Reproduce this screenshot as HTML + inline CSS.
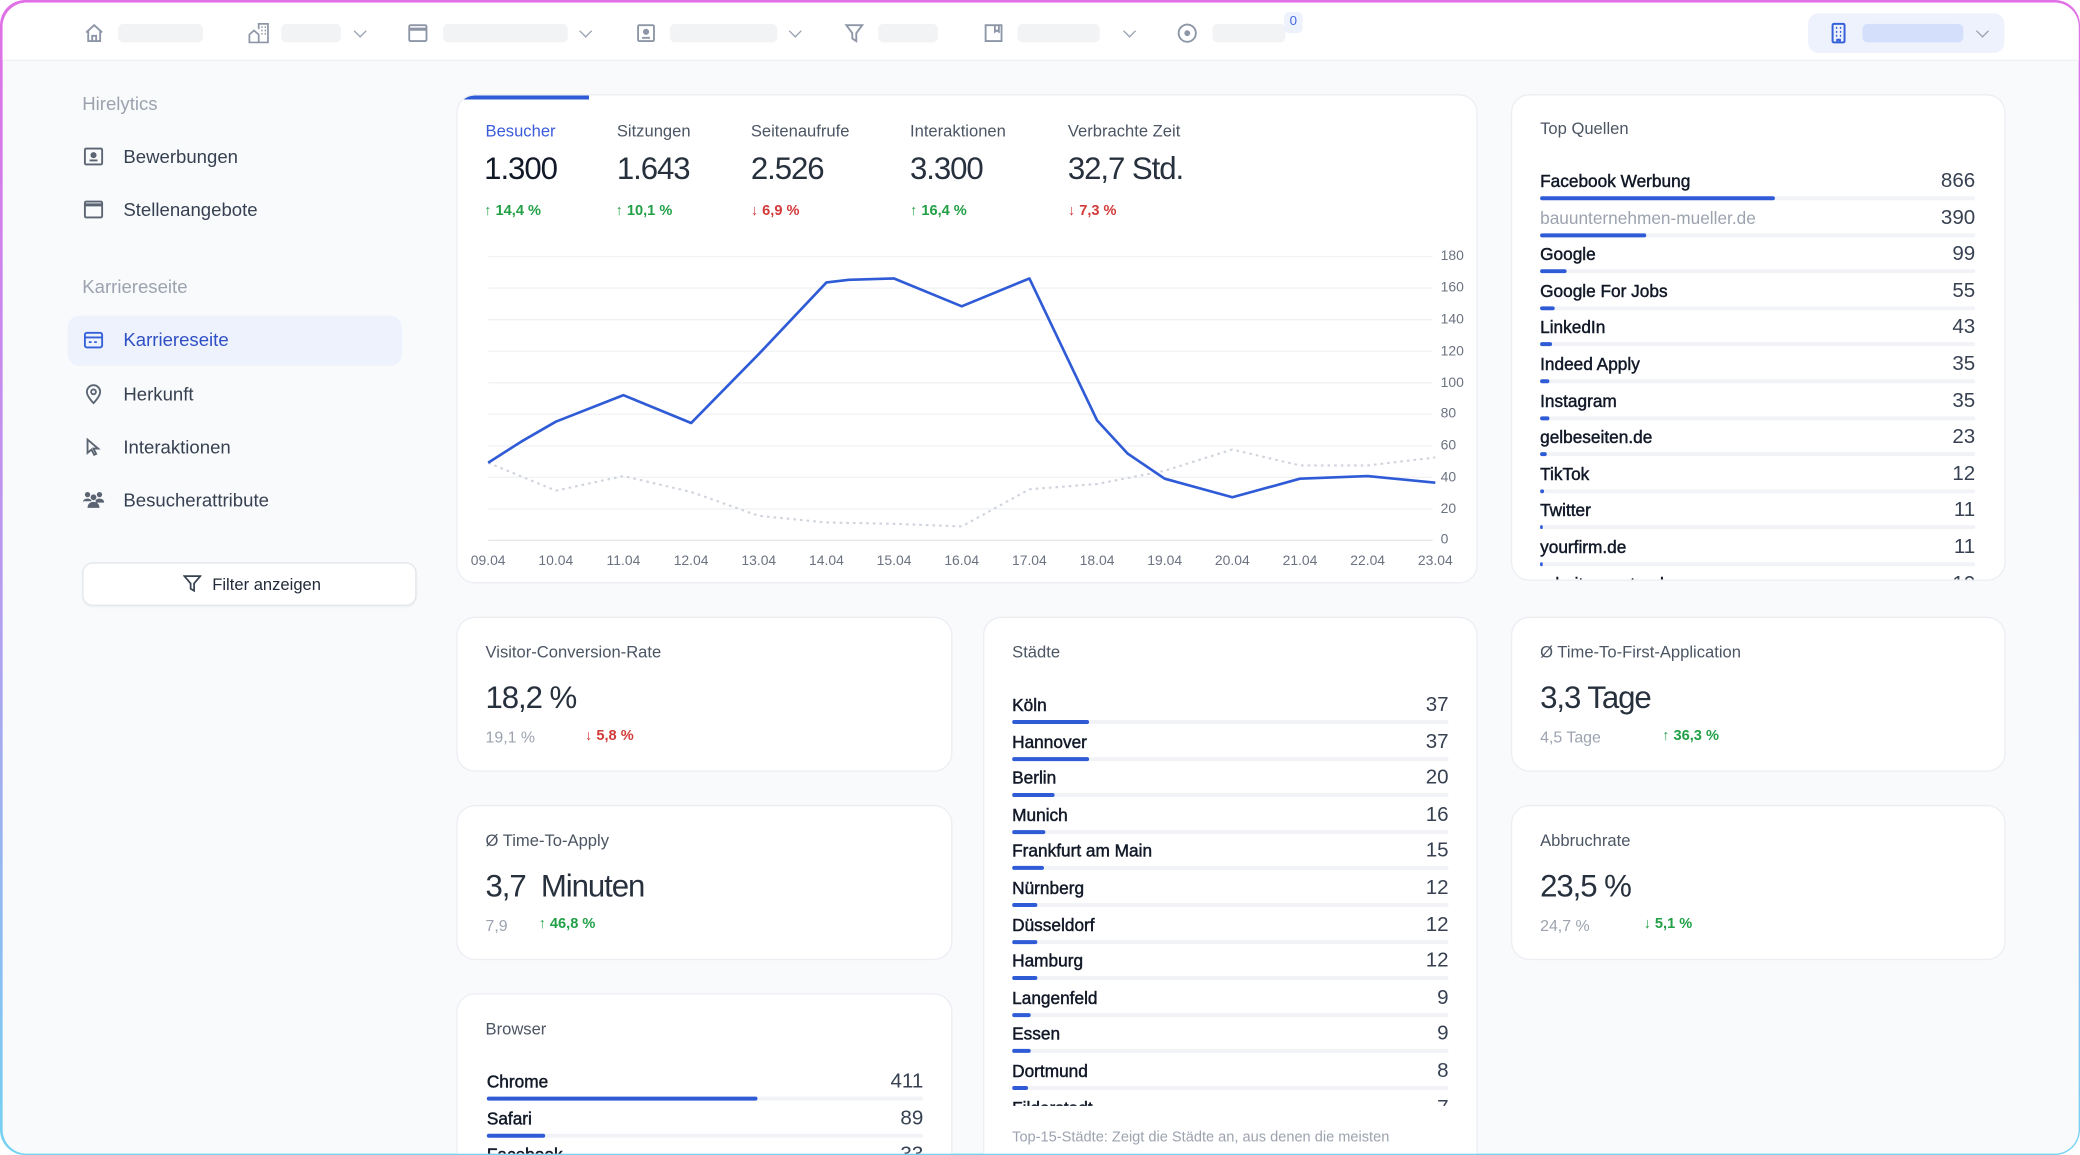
<!DOCTYPE html>
<html><head><meta charset="utf-8"><style>
*{box-sizing:border-box;margin:0;padding:0}
html,body{width:2080px;height:1155px;overflow:hidden;background:#fff;font-family:"Liberation Sans",Arial,sans-serif}
.s{position:absolute;left:0;top:0;width:1568px;height:871px;transform:scale(1.32653,1.32606);transform-origin:0 0}
.frame{position:absolute;left:0;top:0;width:1568px;height:871px;border-radius:19px;background:linear-gradient(180deg,#e16fe6 0%,#b89bf0 50%,#74d2f2 100%)}
.inner{position:absolute;left:1.5px;top:1.5px;right:1.5px;bottom:1.5px;border-radius:18px;background:#f8fafc;overflow:hidden}
.c{position:absolute;left:-1.5px;top:-1.5px;width:1568px;height:871px}
.top{position:absolute;left:0;top:0;right:0;height:46px;background:#fff;border-bottom:1px solid #f0f1f4}
.ph{position:absolute;height:14px;border-radius:4px;background:#f2f3f5}
.ic{position:absolute}
.chev{position:absolute;width:7px;height:7px;border-right:1.3px solid #9aa3b2;border-bottom:1.3px solid #9aa3b2;transform:rotate(45deg)}
.a{position:absolute;white-space:nowrap}
.card{position:absolute;background:#fff;border:1px solid #eceef2;border-radius:14px;overflow:hidden}
.side{font-size:14px;color:#374151}
.row{position:absolute;left:0;right:0;height:27.6px}
.row .l{position:absolute;left:0;top:0;font-size:13px;color:#111827;line-height:16px;-webkit-text-stroke:0.35px #111827}
.row .v{position:absolute;right:0;top:-1px;font-size:15.5px;color:#374151;line-height:18px}
.row .t{position:absolute;left:0;right:0;top:19px;height:3px;background:#f1f3f6;border-radius:2px}
.row .f{position:absolute;left:0;top:0;height:3px;background:#2f5bd6;border-radius:2px}
.ttl{font-size:12.5px;color:#4b5563}
.big{font-size:23.5px;color:#27303d;letter-spacing:-0.8px}
.up{color:#22a047;font-size:11px;font-weight:bold}
.dn{color:#d33a3a;font-size:11px;font-weight:bold}
.gr{color:#9ca3af;font-size:12px}
.ax{font-size:10.5px;fill:#6b7280;font-family:"Liberation Sans",Arial,sans-serif}
</style></head><body><div class="s"><div class="frame"><div class="inner"><div class="c">
<div class="top">
 <svg class="ic" style="left:63px;top:17px" width="16" height="16" viewBox="0 0 16 16" fill="none" stroke="#8d96a6" stroke-width="1.4"><path d="M2 7.5L8 2l6 5.5M3.5 6.5V14h9V6.5M6.5 14v-4h3v4"/></svg>
 <div class="ph" style="left:89px;top:18px;width:64px"></div>
 <svg class="ic" style="left:186px;top:16px" width="18" height="18" viewBox="0 0 18 18" fill="none" stroke="#8d96a6" stroke-width="1.3"><path d="M2 16V10l3.5-3 3.5 3v6zM9 6V2h7v14H9"/><path d="M11 4.5h1M13.5 4.5h1M11 7h1M13.5 7h1M11 9.5h1M13.5 9.5h1"/></svg>
 <div class="ph" style="left:212px;top:18px;width:45px"></div><div class="chev" style="left:268px;top:20px"></div>
 <svg class="ic" style="left:307px;top:17px" width="16" height="16" viewBox="0 0 16 16" fill="none" stroke="#8d96a6" stroke-width="1.4"><rect x="1.5" y="2" width="13" height="12" rx="1"/><path d="M1.5 5h13" stroke-width="2.4"/></svg>
 <div class="ph" style="left:334px;top:18px;width:94px"></div><div class="chev" style="left:438px;top:20px"></div>
 <svg class="ic" style="left:479px;top:17px" width="16" height="16" viewBox="0 0 16 16" fill="none" stroke="#8d96a6" stroke-width="1.4"><rect x="2" y="2" width="12" height="12" rx="1"/><circle cx="8" cy="7" r="1.6" fill="#8d96a6"/><path d="M5 11.5h6"/></svg>
 <div class="ph" style="left:505px;top:18px;width:81px"></div><div class="chev" style="left:596px;top:20px"></div>
 <svg class="ic" style="left:636px;top:17px" width="16" height="16" viewBox="0 0 16 16" fill="none" stroke="#8d96a6" stroke-width="1.4"><path d="M2 2h12L9.5 8v6l-3-2V8z"/></svg>
 <div class="ph" style="left:662px;top:18px;width:45px"></div>
 <svg class="ic" style="left:741px;top:17px" width="16" height="16" viewBox="0 0 16 16" fill="none" stroke="#8d96a6" stroke-width="1.4"><path d="M2 2h12v12H2zM9 2v5l1.5-1L12 7V2"/></svg>
 <div class="ph" style="left:767px;top:18px;width:62px"></div><div class="chev" style="left:848px;top:20px"></div>
 <svg class="ic" style="left:887px;top:17px" width="16" height="16" viewBox="0 0 16 16" fill="none" stroke="#8d96a6" stroke-width="1.4"><circle cx="8" cy="8" r="6.5"/><circle cx="8" cy="8" r="1.5" fill="#8d96a6"/></svg>
 <div class="ph" style="left:914px;top:18px;width:55px"></div>
 <div class="a" style="left:968px;top:9px;width:14px;height:16px;border-radius:4px;background:#eef2fd;color:#4169e1;font-size:10px;text-align:center;line-height:15px">0</div>
 <div class="a" style="left:1363px;top:10px;width:148px;height:30px;border-radius:8px;background:#edf2fd"></div>
 <svg class="ic" style="left:1379px;top:17px" width="14" height="16" viewBox="0 0 14 16" fill="none" stroke="#3560d8" stroke-width="1.5"><rect x="2.5" y="1" width="9" height="14" rx="1"/><path d="M5 4h1M8 4h1M5 7h1M8 7h1M5 10h1M8 10h1M6 15v-2h2v2"/></svg>
 <div class="ph" style="left:1404px;top:18px;width:76px;background:#d3dffb"></div><div class="chev" style="left:1491px;top:20px"></div>
</div>

<div class="a" style="left:62px;top:70px;font-size:14px;color:#9ca3af">Hirelytics</div>
<svg class="ic" style="left:63px;top:111px" width="15" height="14" viewBox="0 0 15 14" fill="none" stroke="#5b6472" stroke-width="1.4"><rect x="1" y="1" width="13" height="12" rx="1"/><circle cx="7.5" cy="6" r="1.6" fill="#5b6472"/><path d="M4.5 10h6"/></svg>
<div class="a side" style="left:93px;top:110px">Bewerbungen</div>
<svg class="ic" style="left:63px;top:151px" width="15" height="14" viewBox="0 0 15 14" fill="none" stroke="#5b6472" stroke-width="1.4"><rect x="1" y="1" width="13" height="12" rx="1"/><path d="M1 3.5h13" stroke-width="2.2"/></svg>
<div class="a side" style="left:93px;top:150px">Stellenangebote</div>
<div class="a" style="left:62px;top:208px;font-size:14px;color:#9ca3af">Karriereseite</div>
<div class="a" style="left:51px;top:238px;width:252px;height:38px;border-radius:9px;background:#edf2fd"></div>
<svg class="ic" style="left:63px;top:250px" width="15" height="13" viewBox="0 0 15 13" fill="none" stroke="#3560d8" stroke-width="1.4"><rect x="1" y="1" width="13" height="11" rx="1.5"/><path d="M1 4.5h13M4 8h2M8 8h2"/></svg>
<div class="a side" style="left:93px;top:248px;color:#2f4fc4">Karriereseite</div>
<svg class="ic" style="left:64px;top:289px" width="13" height="16" viewBox="0 0 13 16" fill="none" stroke="#5b6472" stroke-width="1.4"><path d="M6.5 15s5-5 5-8.5a5 5 0 0 0-10 0C1.5 10 6.5 15 6.5 15z"/><circle cx="6.5" cy="6.5" r="1.8"/></svg>
<div class="a side" style="left:93px;top:289px">Herkunft</div>
<svg class="ic" style="left:64px;top:330px" width="12" height="14" viewBox="0 0 12 14" fill="none" stroke="#5b6472" stroke-width="1.4"><path d="M2 1.5v10l3-2.5 2 4 1.5-.7-2-4H10z"/></svg>
<div class="a side" style="left:93px;top:329px">Interaktionen</div>
<svg class="ic" style="left:62px;top:370px" width="17" height="14" viewBox="0 0 17 14" fill="#5b6472"><circle cx="4" cy="3" r="2"/><circle cx="13" cy="3" r="2"/><circle cx="8.5" cy="5" r="2.2"/><path d="M0.5 9c0-2 1.5-3 3.5-3s3 1 3 2H1zM10 8c0-1 1-2 3-2s3.5 1 3.5 3h-6zM4 13c0-3 2-4.5 4.5-4.5S13 10 13 13z"/></svg>
<div class="a side" style="left:93px;top:369px">Besucherattribute</div>
<div class="a" style="left:62px;top:424px;width:252px;height:33px;border-radius:8px;background:#fff;border:1px solid #e3e6eb;box-shadow:0 1px 2px rgba(0,0,0,.04)"></div>
<svg class="ic" style="left:138px;top:433px" width="14" height="14" viewBox="0 0 14 14" fill="none" stroke="#374151" stroke-width="1.3"><path d="M1 1.5h12L8.3 7v5.5l-2.6-1.5V7z"/></svg>
<div class="a" style="left:160px;top:434px;font-size:12.5px;color:#1f2937">Filter anzeigen</div>

<div class="card" style="left:344px;top:71px;width:770px;height:369px">
 <div style="position:absolute;left:0;top:0;width:99px;height:3px;background:#2f5bd6;border-top-left-radius:14px"></div>
</div>
<div class="a" style="left:366px;top:92px;font-size:12.5px;color:#3b5bdb">Besucher</div>
<div class="a" style="left:465px;top:92px;font-size:12.5px;color:#4b5563">Sitzungen</div>
<div class="a" style="left:566px;top:92px;font-size:12.5px;color:#4b5563">Seitenaufrufe</div>
<div class="a" style="left:686px;top:92px;font-size:12.5px;color:#4b5563">Interaktionen</div>
<div class="a" style="left:805px;top:92px;font-size:12.5px;color:#4b5563">Verbrachte Zeit</div>
<div class="a big" style="left:365px;top:114px;color:#111827">1.300</div>
<div class="a big" style="left:465px;top:114px">1.643</div>
<div class="a big" style="left:566px;top:114px">2.526</div>
<div class="a big" style="left:686px;top:114px">3.300</div>
<div class="a big" style="left:805px;top:114px">32,7 Std.</div>
<div class="a up" style="left:365px;top:153px">↑ 14,4 %</div>
<div class="a up" style="left:464px;top:153px">↑ 10,1 %</div>
<div class="a dn" style="left:566px;top:153px">↓ 6,9 %</div>
<div class="a up" style="left:686px;top:153px">↑ 16,4 %</div>
<div class="a dn" style="left:805px;top:153px">↓ 7,3 %</div>
<svg class="ic" style="left:0;top:0" width="1568" height="440" viewBox="0 0 1568 440">
 <g stroke="#f1f2f4" stroke-width="1">
  <path d="M368 193.5H1080M368 217.3H1080M368 241.1H1080M368 264.9H1080M368 288.7H1080M368 312.4H1080M368 336.2H1080M368 360H1080M368 383.8H1080"/>
 </g>
 <path d="M368 407.5H1080" stroke="#e3e5e9" stroke-width="1"/>
 <g class="ax" text-anchor="start">
  <text x="1086" y="196">180</text><text x="1086" y="220">160</text><text x="1086" y="244">140</text><text x="1086" y="268">120</text><text x="1086" y="292">100</text><text x="1086" y="315">80</text><text x="1086" y="339">60</text><text x="1086" y="363">40</text><text x="1086" y="387">20</text><text x="1086" y="410">0</text>
 </g>
 <g class="ax" text-anchor="middle">
  <text x="368" y="426">09.04</text><text x="419" y="426">10.04</text><text x="470" y="426">11.04</text><text x="521" y="426">12.04</text><text x="572" y="426">13.04</text><text x="623" y="426">14.04</text><text x="674" y="426">15.04</text><text x="725" y="426">16.04</text><text x="776" y="426">17.04</text><text x="827" y="426">18.04</text><text x="878" y="426">19.04</text><text x="929" y="426">20.04</text><text x="980" y="426">21.04</text><text x="1031" y="426">22.04</text><text x="1082" y="426">23.04</text>
 </g>
 <polyline fill="none" stroke="#cfd4dd" stroke-width="1.6" stroke-dasharray="2 3" points="368,349 419,370 470,359 521,371 572,389 623,394 674,395 725,397 776,369 827,365 878,355 929,339 980,351 1031,351 1082,345"/>
 <polyline fill="none" stroke="#2f5bd6" stroke-width="2" stroke-linejoin="round" points="368,349 393,333 419,318 470,298 521,319 572,267 623,213 640,211 674,210 725,231 776,210 827,317 850,342 878,361 929,375 980,361 1031,359 1082,364"/>
</svg>

<div class="card" style="left:1139px;top:71px;width:373px;height:367px">
 <div class="a ttl" style="left:21px;top:18px">Top Quellen</div>
 <div style="position:absolute;left:21px;right:22px;top:57px;bottom:0">
  <div class="row" style="top:0"><div class="l">Facebook Werbung</div><div class="v">866</div><div class="t"><div class="f" style="width:177px"></div></div></div>
  <div class="row" style="top:27.6px"><div class="l" style="color:#9ca3af;-webkit-text-stroke:0">bauunternehmen-mueller.de</div><div class="v">390</div><div class="t"><div class="f" style="width:80px"></div></div></div>
  <div class="row" style="top:55.2px"><div class="l">Google</div><div class="v">99</div><div class="t"><div class="f" style="width:20px"></div></div></div>
  <div class="row" style="top:82.8px"><div class="l">Google For Jobs</div><div class="v">55</div><div class="t"><div class="f" style="width:11px"></div></div></div>
  <div class="row" style="top:110.4px"><div class="l">LinkedIn</div><div class="v">43</div><div class="t"><div class="f" style="width:9px"></div></div></div>
  <div class="row" style="top:138px"><div class="l">Indeed Apply</div><div class="v">35</div><div class="t"><div class="f" style="width:7px"></div></div></div>
  <div class="row" style="top:165.6px"><div class="l">Instagram</div><div class="v">35</div><div class="t"><div class="f" style="width:7px"></div></div></div>
  <div class="row" style="top:193.2px"><div class="l">gelbeseiten.de</div><div class="v">23</div><div class="t"><div class="f" style="width:5px"></div></div></div>
  <div class="row" style="top:220.8px"><div class="l">TikTok</div><div class="v">12</div><div class="t"><div class="f" style="width:3px"></div></div></div>
  <div class="row" style="top:248.4px"><div class="l">Twitter</div><div class="v">11</div><div class="t"><div class="f" style="width:2px"></div></div></div>
  <div class="row" style="top:276px"><div class="l">yourfirm.de</div><div class="v">11</div><div class="t"><div class="f" style="width:2px"></div></div></div>
  <div class="row" style="top:303.6px"><div class="l">arbeitsagentur.de</div><div class="v">10</div><div class="t"><div class="f" style="width:2px"></div></div></div>
 </div>
</div>

<div class="card" style="left:344px;top:465px;width:374px;height:117px">
 <div class="a ttl" style="left:21px;top:19px">Visitor-Conversion-Rate</div>
 <div class="a big" style="left:21px;top:47px">18,2 %</div>
 <div class="a gr" style="left:21px;top:83px">19,1 %</div>
 <div class="a dn" style="left:96px;top:83px">↓ 5,8 %</div>
</div>
<div class="card" style="left:344px;top:607px;width:374px;height:117px">
 <div class="a ttl" style="left:21px;top:19px">Ø Time-To-Apply</div>
 <div class="a big" style="left:21px;top:47px">3,7&nbsp; Minuten</div>
 <div class="a gr" style="left:21px;top:83px">7,9</div>
 <div class="a up" style="left:61px;top:83px">↑ 46,8 %</div>
</div>
<div class="card" style="left:344px;top:749px;width:374px;height:140px">
 <div class="a ttl" style="left:21px;top:19px">Browser</div>
 <div style="position:absolute;left:22px;right:21px;top:58px;height:80px">
  <div class="row" style="top:0"><div class="l">Chrome</div><div class="v">411</div><div class="t"><div class="f" style="width:204px"></div></div></div>
  <div class="row" style="top:27.6px"><div class="l">Safari</div><div class="v">89</div><div class="t"><div class="f" style="width:44px"></div></div></div>
  <div class="row" style="top:55.2px"><div class="l">Facebook</div><div class="v">33</div><div class="t"><div class="f" style="width:16px"></div></div></div>
 </div>
</div>

<div class="card" style="left:741px;top:465px;width:373px;height:430px">
 <div class="a ttl" style="left:21px;top:19px">Städte</div>
 <div style="position:absolute;left:21px;right:21px;top:58px;height:310px;overflow:hidden">
  <div class="row" style="top:0"><div class="l">Köln</div><div class="v">37</div><div class="t"><div class="f" style="width:58px"></div></div></div>
  <div class="row" style="top:27.6px"><div class="l">Hannover</div><div class="v">37</div><div class="t"><div class="f" style="width:58px"></div></div></div>
  <div class="row" style="top:55.2px"><div class="l">Berlin</div><div class="v">20</div><div class="t"><div class="f" style="width:32px"></div></div></div>
  <div class="row" style="top:82.8px"><div class="l">Munich</div><div class="v">16</div><div class="t"><div class="f" style="width:25px"></div></div></div>
  <div class="row" style="top:110.4px"><div class="l">Frankfurt am Main</div><div class="v">15</div><div class="t"><div class="f" style="width:24px"></div></div></div>
  <div class="row" style="top:138px"><div class="l">Nürnberg</div><div class="v">12</div><div class="t"><div class="f" style="width:19px"></div></div></div>
  <div class="row" style="top:165.6px"><div class="l">Düsseldorf</div><div class="v">12</div><div class="t"><div class="f" style="width:19px"></div></div></div>
  <div class="row" style="top:193.2px"><div class="l">Hamburg</div><div class="v">12</div><div class="t"><div class="f" style="width:19px"></div></div></div>
  <div class="row" style="top:220.8px"><div class="l">Langenfeld</div><div class="v">9</div><div class="t"><div class="f" style="width:14px"></div></div></div>
  <div class="row" style="top:248.4px"><div class="l">Essen</div><div class="v">9</div><div class="t"><div class="f" style="width:14px"></div></div></div>
  <div class="row" style="top:276px"><div class="l">Dortmund</div><div class="v">8</div><div class="t"><div class="f" style="width:12px"></div></div></div>
  <div class="row" style="top:303.6px"><div class="l">Filderstadt</div><div class="v">7</div><div class="t"><div class="f" style="width:11px"></div></div></div>
 </div>
 <div class="a" style="left:21px;top:386px;font-size:11px;color:#9ca3af">Top-15-Städte: Zeigt die Städte an, aus denen die meisten</div>
</div>

<div class="card" style="left:1139px;top:465px;width:373px;height:117px">
 <div class="a ttl" style="left:21px;top:19px">Ø Time-To-First-Application</div>
 <div class="a big" style="left:21px;top:47px">3,3 Tage</div>
 <div class="a gr" style="left:21px;top:83px">4,5 Tage</div>
 <div class="a up" style="left:113px;top:83px">↑ 36,3 %</div>
</div>
<div class="card" style="left:1139px;top:607px;width:373px;height:117px">
 <div class="a ttl" style="left:21px;top:19px">Abbruchrate</div>
 <div class="a big" style="left:21px;top:47px">23,5 %</div>
 <div class="a gr" style="left:21px;top:83px">24,7 %</div>
 <div class="a up" style="left:99px;top:83px">↓ 5,1 %</div>
</div>
</div></div></div></div></body></html>
